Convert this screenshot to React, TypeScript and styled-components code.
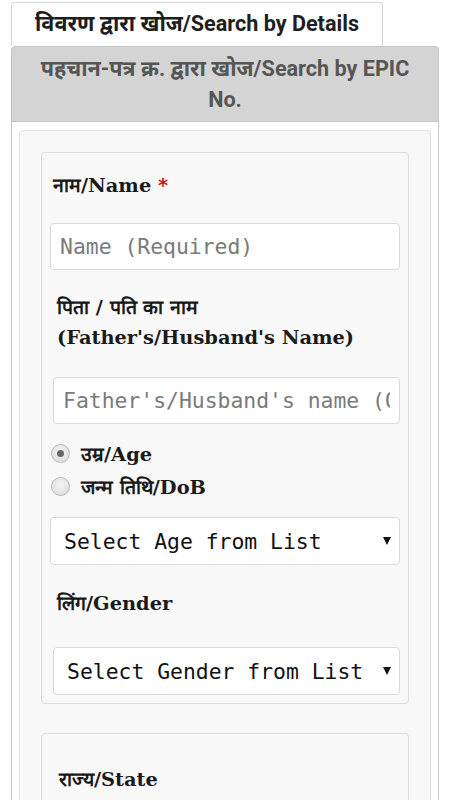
import React, { useState } from "react";
import styled, { createGlobalStyle } from "styled-components";

const GlobalStyle = createGlobalStyle`
  body {
    margin: 0;
    background: #fff;
    font-family: Roboto, "Noto Sans", sans-serif;
  }
  * { box-sizing: border-box; }
`;

const Page = styled.div`
  width: 450px;
  padding: 2px 11px 0 11px;
`;

const TabList = styled.div`
  display: flex;
  flex-direction: column;
  align-items: flex-start;
`;

const Tab = styled.div<{ $active?: boolean }>`
  width: ${(p) => (p.$active ? "372px" : "100%")};
  padding: ${(p) => (p.$active ? "5px 6px 0" : "6px 26px 3px")};
  height: ${(p) => (p.$active ? "44px" : "76px")};
  border: 1px solid ${(p) => (p.$active ? "#d6d6d6" : "#c4c4c4")};
  border-bottom: ${(p) => (p.$active ? "none" : "1px solid #c4c4c4")};
  border-radius: 4px 4px 0 0;
  background: ${(p) => (p.$active ? "#fff" : "#d4d4d4")};
  color: ${(p) => (p.$active ? "#1e1e1e" : "#555")};
  font-size: 21.6px;
  font-weight: 700;
  line-height: ${(p) => (p.$active ? "32px" : "31px")};
  text-align: center;
  white-space: ${(p) => (p.$active ? "nowrap" : "normal")};
`;

const Panel = styled.div`
  border: 1px solid #c8c8c8;
  border-top: none;
  padding: 8px 7px 0 7px;
  min-height: 700px;
`;

const Well = styled.div`
  background: #f8f8f8;
  border: 1px solid #e3e3e3;
  border-radius: 4px;
  padding: 21px 21px 0 21px;
  min-height: 700px;
`;

const FieldBox = styled.div`
  border: 1px solid #dcdcdc;
  border-radius: 4px;
  background: #f8f8f8;
  padding: 0 8px 8px 8px;
  & + & {
    margin-top: 29px;
  }
`;

const Label = styled.div<{ $top: number; $indent?: number }>`
  margin-top: ${(p) => p.$top}px;
  padding-left: ${(p) => p.$indent ?? 3}px;
  font-family: "DejaVu Serif", "Liberation Serif", serif;
  font-weight: 700;
  font-size: 19.4px;
  line-height: 30px;
  color: #1a1a1a;
`;

const Required = styled.span`
  color: #d40000;
`;

const TextInput = styled.input<{ $top: number; $inset?: number }>`
  display: block;
  margin-top: ${(p) => p.$top}px;
  margin-left: ${(p) => p.$inset ?? 0}px;
  width: calc(100% - ${(p) => p.$inset ?? 0}px);
  height: 47px;
  padding: 0 9px;
  border: 1px solid #dadada;
  border-radius: 4px;
  background: #fff;
  font-family: "DejaVu Sans Mono", "Liberation Mono", monospace;
  font-size: 21.4px;
  color: #222;
  outline: none;
  &::placeholder {
    color: #7a7a7a;
  }
`;

const RadioGroup = styled.div`
  margin-top: 13px;
  display: flex;
  flex-direction: column;
`;

const RadioRow = styled.label`
  display: flex;
  align-items: center;
  height: 33px;
  font-family: "DejaVu Serif", "Liberation Serif", serif;
  font-weight: 700;
  font-size: 19.4px;
  color: #1a1a1a;
`;

const Radio = styled.input`
  appearance: none;
  width: 19px;
  height: 19px;
  margin: 0 11px 0 1px;
  border-radius: 50%;
  border: 1px solid #b8b8b8;
  background: radial-gradient(circle at 50% 40%, #f4f4f4, #d8d8d8);
  display: grid;
  place-items: center;
  &:checked::after {
    content: "";
    width: 7px;
    height: 7px;
    border-radius: 50%;
    background: #666;
  }
`;

const SelectWrap = styled.div<{ $top: number; $inset?: number }>`
  position: relative;
  margin-top: ${(p) => p.$top}px;
  margin-left: ${(p) => p.$inset ?? 0}px;
`;

const Select = styled.select`
  display: block;
  width: 100%;
  height: 48px;
  appearance: none;
  padding: 0 30px 0 13px;
  border: 1px solid #dadada;
  border-radius: 4px;
  background: #fff;
  font-family: "DejaVu Sans Mono", "Liberation Mono", monospace;
  font-size: 21.4px;
  color: #111;
  outline: none;
`;

/* the little drop-down triangle drawn over the select */
const Arrow = styled.span`
  position: absolute;
  right: 9px;
  top: 50%;
  margin-top: -4px;
  width: 0;
  height: 0;
  border-left: 4px solid transparent;
  border-right: 4px solid transparent;
  border-top: 8px solid #111;
  pointer-events: none;
`;

export default function App() {
  const [mode, setMode] = useState("age");

  return (
    <Page>
      <GlobalStyle />
      <TabList>
        <Tab $active>विवरण द्वारा खोज/Search by Details</Tab>
        <Tab>पहचान-पत्र क्र. द्वारा खोज/Search by EPIC No.</Tab>
      </TabList>
      <Panel>
        <Well>
          <FieldBox>
            <Label $top={18} $indent={3}>
              नाम/Name <Required>*</Required>
            </Label>
            <TextInput $top={22} placeholder="Name (Required)" />

            <Label $top={23} $indent={7}>
              पिता / पति का नाम
              <br />
              (Father's/Husband's Name)
            </Label>
            <TextInput
              $top={24}
              $inset={3}
              placeholder="Father's/Husband's name (Optional)"
            />

            <RadioGroup>
              <RadioRow>
                <Radio
                  type="radio"
                  name="mode"
                  checked={mode === "age"}
                  onChange={() => setMode("age")}
                />
                उम्र/Age
              </RadioRow>
              <RadioRow>
                <Radio
                  type="radio"
                  name="mode"
                  checked={mode === "dob"}
                  onChange={() => setMode("dob")}
                />
                जन्म तिथि/DoB
              </RadioRow>
            </RadioGroup>

            <SelectWrap $top={14}>
              <Select defaultValue="">
                <option value="">Select Age from List</option>
              </Select>
              <Arrow />
            </SelectWrap>

            <Label $top={24} $indent={7}>
              लिंग/Gender
            </Label>
            <SelectWrap $top={28} $inset={3}>
              <Select defaultValue="">
                <option value="">Select Gender from List</option>
              </Select>
              <Arrow />
            </SelectWrap>
          </FieldBox>

          <FieldBox>
            <Label $top={31} $indent={9}>
              राज्य/State
            </Label>
          </FieldBox>
        </Well>
      </Panel>
    </Page>
  );
}
